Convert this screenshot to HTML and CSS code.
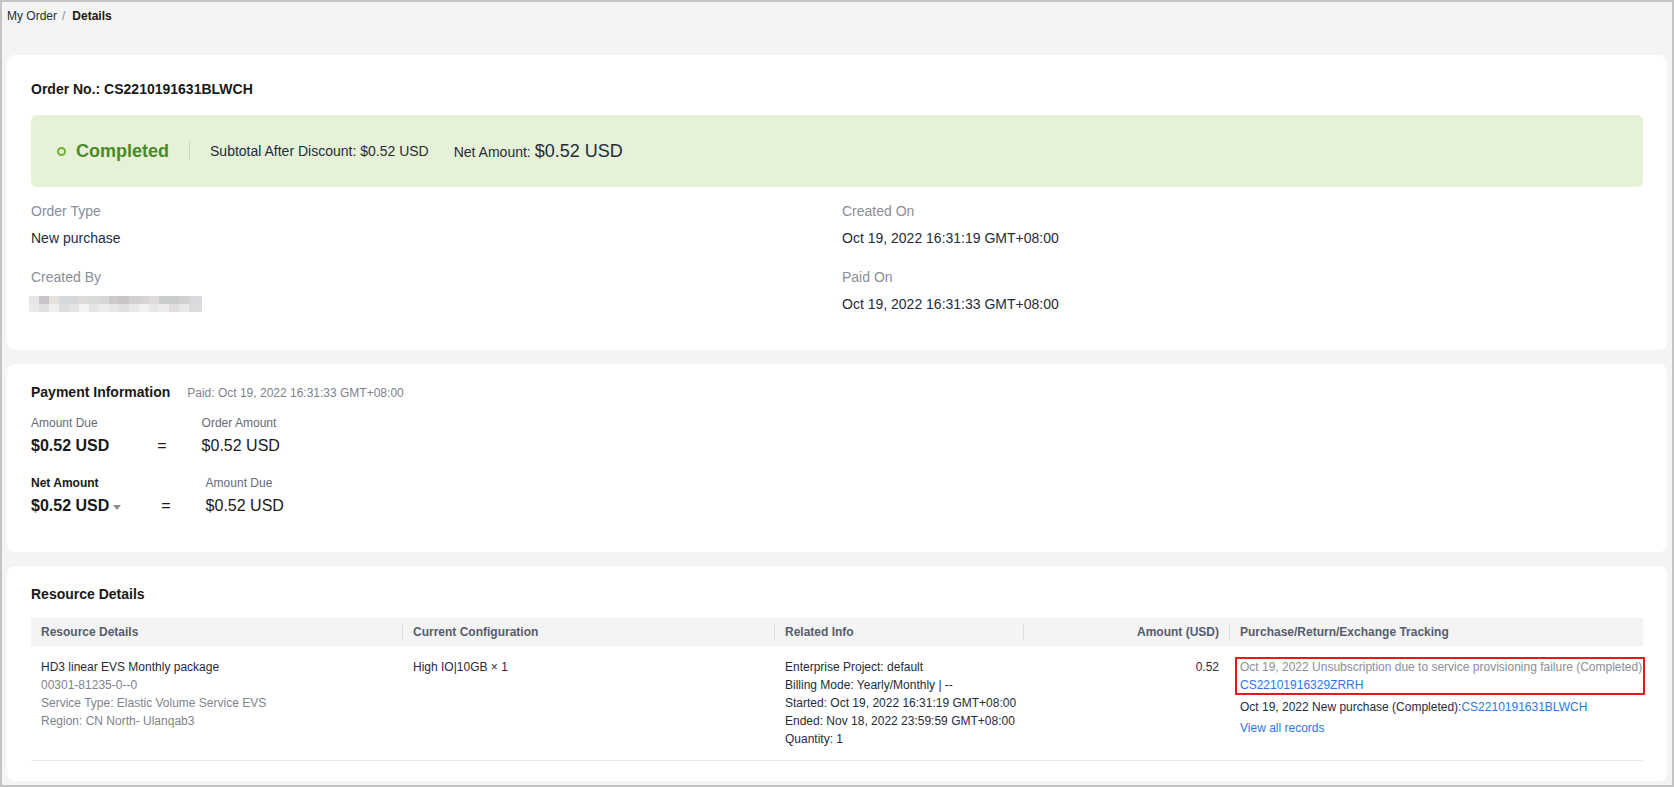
FILE: index.html
```html
<!DOCTYPE html>
<html lang="en">
<head>
<meta charset="utf-8">
<title>Order Details</title>
<link rel="stylesheet" href="styles.css">
</head>
<body>
<div class="page">
  <nav class="breadcrumb">
    <span class="crumb">My Order</span><span class="crumb-sep">/</span><span class="crumb crumb-current">Details</span>
  </nav>

  <section class="card card-order">
    <h2 class="card-title">Order No.: CS2210191631BLWCH</h2>
    <div class="status-banner">
      <span class="status"><span class="status-dot"></span>Completed</span>
      <span class="status-divider"></span>
      <span class="subtotal">Subtotal After Discount: $0.52 USD</span>
      <span class="net">Net Amount: <span class="net-value">$0.52 USD</span></span>
    </div>
    <div class="fields">
      <div class="field">
        <div class="field-label">Order Type</div>
        <div class="field-value">New purchase</div>
      </div>
      <div class="field">
        <div class="field-label">Created On</div>
        <div class="field-value">Oct 19, 2022 16:31:19 GMT+08:00</div>
      </div>
      <div class="field">
        <div class="field-label">Created By</div>
        <div class="field-value"><span class="blurred"></span></div>
      </div>
      <div class="field">
        <div class="field-label">Paid On</div>
        <div class="field-value">Oct 19, 2022 16:31:33 GMT+08:00</div>
      </div>
    </div>
  </section>

  <section class="card card-payment">
    <div class="card-head">
      <h2 class="card-title">Payment Information</h2>
      <span class="card-sub">Paid: Oct 19, 2022 16:31:33 GMT+08:00</span>
    </div>
    <div class="calc-row">
      <div class="calc-col">
        <div class="calc-label">Amount Due</div>
        <div class="calc-value calc-strong">$0.52 USD</div>
      </div>
      <div class="calc-eq">=</div>
      <div class="calc-col">
        <div class="calc-label">Order Amount</div>
        <div class="calc-value">$0.52 USD</div>
      </div>
    </div>
    <div class="calc-row calc-row-net">
      <div class="calc-col">
        <div class="calc-label calc-label-strong">Net Amount</div>
        <div class="calc-value calc-strong">$0.52 USD<span class="caret"></span></div>
      </div>
      <div class="calc-eq calc-eq-net">=</div>
      <div class="calc-col">
        <div class="calc-label">Amount Due</div>
        <div class="calc-value">$0.52 USD</div>
      </div>
    </div>
  </section>

  <section class="card card-resource">
    <h2 class="card-title">Resource Details</h2>
    <table class="res-table">
      <colgroup>
        <col class="col-1"><col class="col-2"><col class="col-3"><col class="col-4"><col class="col-5">
      </colgroup>
      <thead>
        <tr>
          <th>Resource Details</th>
          <th class="th-sep">Current Configuration</th>
          <th class="th-sep">Related Info</th>
          <th class="th-sep th-right">Amount (USD)</th>
          <th class="th-sep">Purchase/Return/Exchange Tracking</th>
        </tr>
      </thead>
      <tbody>
        <tr>
          <td>
            <div class="line-dark">HD3 linear EVS Monthly package</div>
            <div class="line-muted">00301-81235-0--0</div>
            <div class="line-muted">Service Type: Elastic Volume Service EVS</div>
            <div class="line-muted">Region: CN North- Ulanqab3</div>
          </td>
          <td><div class="line-dark">High IO|10GB × 1</div></td>
          <td class="td-nowrap">
            <div class="line-dark">Enterprise Project: default</div>
            <div class="line-dark">Billing Mode: Yearly/Monthly | --</div>
            <div class="line-dark">Started: Oct 19, 2022 16:31:19 GMT+08:00</div>
            <div class="line-dark">Ended: Nov 18, 2022 23:59:59 GMT+08:00</div>
            <div class="line-dark">Quantity: 1</div>
          </td>
          <td class="td-right"><div class="line-dark">0.52</div></td>
          <td class="td-track">
            <div class="record record-highlight">
              <span class="record-text-muted">Oct 19, 2022 Unsubscription due to service provisioning failure (Completed)</span>
              <a class="link link-block" href="#">CS22101916329ZRRH</a>
            </div>
            <div class="record">
              <span class="line-dark">Oct 19, 2022 New purchase (Completed):</span><a class="link" href="#">CS2210191631BLWCH</a>
            </div>
            <div class="view-all"><a class="link" href="#">View all records</a></div>
          </td>
        </tr>
      </tbody>
    </table>
  </section>
</div>
</body>
</html>
```

FILE: styles.css
```css
* { box-sizing: border-box; }

html, body {
  margin: 0;
  padding: 0;
}

body {
  font-family: "Liberation Sans", Arial, sans-serif;
  color: #252b3a;
  background: #f4f4f4;
}

.page {
  height: 787px;
  border: 2px solid #c4c4c4;
  background: #f4f4f4;
  padding: 5px 5px;
  overflow: hidden;
}

/* breadcrumb */
.breadcrumb {
  font-size: 12px;
  line-height: 18px;
  color: #252b3a;
  margin-bottom: 30px;
}
.crumb-sep {
  color: #8a8e99;
  margin: 0 7px 0 5px;
}
.crumb-current {
  font-weight: bold;
  color: #191919;
}

/* cards */
.card {
  background: #ffffff;
  border-radius: 8px;
  padding: 18px 24px 20px;
}
.card + .card {
  margin-top: 14px;
}
.card-title {
  margin: 0;
  font-size: 14px;
  line-height: 20px;
  font-weight: bold;
  color: #191919;
}

.card-order {
  padding: 24px 24px 36px;
}

/* status banner */
.status-banner {
  margin-top: 16px;
  height: 72px;
  background: #e5f2d7;
  border-radius: 6px;
  display: flex;
  align-items: center;
  padding-left: 26px;
  font-size: 14px;
  color: #252b3a;
}
.status {
  display: flex;
  align-items: center;
  font-size: 18px;
  font-weight: bold;
  color: #4a8a28;
}
.status-dot {
  width: 9px;
  height: 9px;
  border: 2px solid #72b234;
  border-radius: 50%;
  margin-right: 10px;
}
.status-divider {
  width: 1px;
  height: 18px;
  background: #c9d6bd;
  margin: 0 20px 0 20px;
}
.net {
  margin-left: 25px;
}
.net-value {
  font-size: 18px;
}

/* fields */
.fields {
  margin-top: 14px;
  display: grid;
  grid-template-columns: 1fr 1fr;
  column-gap: 10px;
  row-gap: 19px;
}
.field-label {
  font-size: 14px;
  line-height: 20px;
  color: #8a8e99;
}
.field-value {
  margin-top: 7px;
  font-size: 14px;
  line-height: 20px;
  color: #252b3a;
  display: flex;
  align-items: center;
  height: 20px;
}
.blurred {
  display: block;
  width: 173px;
  height: 16px;
  margin-left: -2px;
  background:
    linear-gradient(to right,
      #e6e6e6 0 10px, #c9c4c9 10px 20px, #e6e1de 20px 30px, #d3d9db 30px 40px,
      #d7d7d7 40px 50px, #dddad8 50px 60px, #d7dbdc 60px 70px, #d8d8d8 70px 80px,
      #cdc9c9 80px 90px, #c9c4c8 90px 100px, #d1d1d1 100px 110px, #d8d3d3 110px 120px,
      #e0dbdb 120px 130px, #c9cdcd 130px 140px, #c9cccc 140px 150px, #d1d1d1 150px 160px,
      #d8d9dc 160px 173px) top left / 100% 8px no-repeat,
    linear-gradient(to right,
      #eaeaea 0 10px, #e0dedf 10px 20px, #f0f0f0 20px 30px, #dedede 30px 40px,
      #e4e4e4 40px 50px, #f4f4f2 50px 60px, #e4e4e4 60px 70px, #ececec 70px 80px,
      #e6e6e6 80px 90px, #e0e0e0 90px 100px, #e8e8e8 100px 110px, #f1f1f1 110px 120px,
      #e8e8e8 120px 130px, #ececec 130px 140px, #e2dede 140px 150px, #e8e8e8 150px 160px,
      #dcdcdc 160px 173px) bottom left / 100% 8px no-repeat;
}

/* payment */
.card-payment {
  padding: 18px 24px 35px;
}
.card-head {
  display: flex;
  align-items: baseline;
}
.card-sub {
  margin-left: 17px;
  font-size: 12px;
  color: #7d828e;
}
.calc-row {
  display: flex;
  align-items: flex-end;
  margin-top: 12px;
}
.calc-row-net {
  margin-top: 17px;
}
.calc-label {
  font-size: 12px;
  line-height: 18px;
  color: #666b78;
}
.calc-label-strong {
  font-weight: bold;
  color: #191919;
}
.calc-value {
  margin-top: 3px;
  font-size: 16px;
  line-height: 22px;
  color: #191919;
  display: flex;
  align-items: center;
}
.calc-strong {
  font-weight: bold;
}
.caret {
  width: 0;
  height: 0;
  margin-left: 4px;
  margin-top: 2px;
  border-left: 4px solid transparent;
  border-right: 4px solid transparent;
  border-top: 5px solid #8a8e99;
}
.calc-eq {
  font-size: 16px;
  line-height: 22px;
  color: #191919;
  margin: 0 35px 0 48px;
}
.calc-eq-net {
  margin-left: 40px;
}

/* resource table */
.res-table {
  margin-top: 14px;
  width: 100%;
  border-collapse: collapse;
  table-layout: fixed;
  font-size: 12px;
}
.col-1 { width: 371px; }
.col-2 { width: 372px; }
.col-3 { width: 249px; }
.col-4 { width: 206px; }
.col-5 { width: 414px; }

.res-table th {
  height: 28px;
  padding: 0 10px 0 10px;
  background-color: #f4f4f4;
  text-align: left;
  font-weight: bold;
  color: #575d6c;
  line-height: 18px;
  white-space: nowrap;
}
.res-table th.th-sep {
  padding-left: 11px;
  background-image: linear-gradient(#dcdee3, #dcdee3);
  background-repeat: no-repeat;
  background-position: left center;
  background-size: 1px 16px;
}
.res-table th.th-right {
  text-align: right;
}
.res-table td {
  padding: 12px 10px 12px 11px;
  vertical-align: top;
  line-height: 18px;
  border-bottom: 1px solid #e8e8e8;
}
.res-table td:first-child {
  padding-left: 10px;
}
.res-table td.td-right {
  text-align: right;
}
.res-table td.td-nowrap {
  white-space: nowrap;
}
.res-table td.td-track {
  padding-right: 0;
}
.line-dark {
  color: #252b3a;
}
.line-muted {
  color: #7f838d;
}
.record-text-muted {
  color: #8a8e99;
  white-space: nowrap;
}
.record {
  position: relative;
}
.record + .record {
  margin-top: 4px;
}
.record-highlight::after {
  content: "";
  position: absolute;
  top: -1px;
  bottom: -1px;
  left: -5px;
  right: -2px;
  border: 2px solid #e5191c;
  pointer-events: none;
}
.view-all {
  margin-top: 3px;
}
.link {
  color: #2a78e4;
  text-decoration: none;
}
.link-block {
  display: block;
}
```
